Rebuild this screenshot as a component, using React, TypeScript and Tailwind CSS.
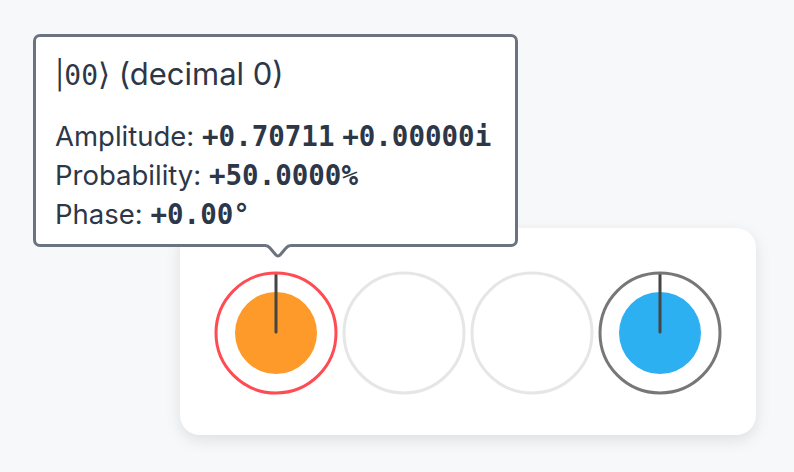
import React from "react";

const sans = { fontFamily: "Inter, 'Noto Sans', 'Liberation Sans', sans-serif" };
const mono = { fontFamily: "'DejaVu Sans Mono', 'Liberation Mono', monospace" };

function Qubit({ ring, fill }: { ring: string; fill?: string }) {
  return (
    <svg width="128" height="128" viewBox="0 0 128 128" className="block shrink-0">
      {fill && <circle cx="64" cy="64" r="41" fill={fill} />}
      {fill && (
        <line x1="64" y1="5" x2="64" y2="63" stroke="#454545" strokeWidth="3" strokeLinecap="round" />
      )}
      <circle cx="64" cy="64" r="60" fill="none" stroke={ring} strokeWidth="3" />
    </svg>
  );
}

export default function App() {
  return (
    <div className="relative w-[794px] h-[472px] bg-[#f7f8fa] overflow-hidden" style={sans}>
      <div className="pt-[228px] pl-[180px]">
        <div className="w-[576px] h-[207px] bg-white rounded-[20px] shadow-[0_5px_16px_rgba(0,0,0,0.1)] flex items-center px-[32px] pt-[2px]">
          <Qubit ring="#ff4b52" fill="#fe9a29" />
          <Qubit ring="#e6e6e6" />
          <Qubit ring="#e6e6e6" />
          <Qubit ring="#777777" fill="#2cb0f2" />
        </div>
      </div>

      <div className="absolute left-[33px] top-[34px] w-[485px] h-[213px] bg-white border-[3px] border-[#6b7280] rounded-[7px] px-[19px] pt-[17px] text-[#2d3748] text-[27.5px] leading-[39px]">
        <div className="whitespace-nowrap text-[31px]">
          <span className="text-[28px]">|</span>
          <span className="text-[28px]" style={mono}>00</span>
          <span>⟩ (decimal 0)</span>
        </div>
        <div className="mt-[22px] whitespace-nowrap">
          Amplitude: <span className="font-bold" style={mono}>+0.70711</span>{" "}
          <span className="font-bold" style={mono}>+0.00000i</span>
        </div>
        <div className="whitespace-nowrap">
          Probability: <span className="font-bold" style={mono}>+50.0000%</span>
        </div>
        <div className="whitespace-nowrap">
          Phase: <span className="font-bold" style={mono}>+0.00°</span>
        </div>
        <svg
          width="44"
          height="18"
          viewBox="0 0 44 18"
          className="absolute left-[220px] top-[207px]"
        >
          <path d="M9 0 L9 1.5 Q12 1.5 14 4 L19.5 10.5 Q22 13.5 24.5 10.5 L30 4 Q32 1.5 35 1.5 L35 0 Z" fill="white" />
          <path
            d="M0 1.5 H9 Q12 1.5 14 4 L19.5 10.5 Q22 13.5 24.5 10.5 L30 4 Q32 1.5 35 1.5 H44"
            fill="none"
            stroke="#6b7280"
            strokeWidth="3"
            strokeLinejoin="round"
          />
        </svg>
      </div>
    </div>
  );
}
